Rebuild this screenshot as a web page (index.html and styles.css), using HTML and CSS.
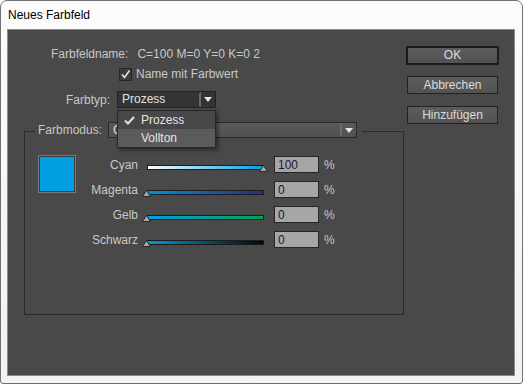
FILE: index.html
```html
<!DOCTYPE html>
<html lang="de">
<head>
    <meta charset="UTF-8">
    <title>Neues Farbfeld</title>
    <link rel="stylesheet" href="styles.css">
</head>
<body>
    <div class="window">
        <div class="titlebar">Neues Farbfeld</div>
        <div class="content">
            <div class="main">
                <div class="row name-row">
                    <span>Farbfeldname:</span>
                    <span class="name-value">C=100 M=0 Y=0 K=0 2</span>
                </div>
                <label class="row check-row">
                    <span class="checkbox">
                        <svg width="11" height="11" viewBox="0 0 11 11"><polyline points="2,5.5 4.5,8.5 9.5,1.5" fill="none" stroke="#e6e6e6" stroke-width="1.6"/></svg>
                    </span>
                    Name mit Farbwert
                </label>
                <div class="row type-row">
                    <span>Farbtyp:</span>
                    <div class="select select-dark">
                        <span class="select-text">Prozess</span>
                        <span class="select-btn"><span class="arrow"></span></span>
                        <ul class="popup">
                            <li>
                                <svg class="tick" width="11" height="9" viewBox="0 0 11 9"><polyline points="1,4.5 4,7.5 10,1" fill="none" stroke="#e2e2e2" stroke-width="2"/></svg>
                                Prozess
                            </li>
                            <li class="active">Vollton</li>
                        </ul>
                    </div>
                </div>

                <div class="group">
                    <div class="group-head">
                        <span class="group-label">Farbmodus:</span>
                        <div class="select select-light">
                            <span class="select-text">CMYK</span>
                            <span class="select-btn"><span class="arrow"></span></span>
                        </div>
                    </div>
                    <div class="group-body">
                        <div class="swatch"></div>
                        <div class="sliders">
                            <span class="slider-label">Cyan</span>
                            <div class="slider"><div class="track track-cyan"></div><svg class="thumb" style="left: 100%" width="9" height="7" viewBox="0 0 9 7"><polygon points="4.5,0.5 8.5,6.5 0.5,6.5" fill="#a8a8a8" stroke="#2a2a2a"/></svg></div>
                            <input type="text" value="100">
                            <span class="pct">%</span>

                            <span class="slider-label">Magenta</span>
                            <div class="slider"><div class="track track-magenta"></div><svg class="thumb" style="left: 0%" width="9" height="7" viewBox="0 0 9 7"><polygon points="4.5,0.5 8.5,6.5 0.5,6.5" fill="#a8a8a8" stroke="#2a2a2a"/></svg></div>
                            <input type="text" value="0">
                            <span class="pct">%</span>

                            <span class="slider-label">Gelb</span>
                            <div class="slider"><div class="track track-gelb"></div><svg class="thumb" style="left: 0%" width="9" height="7" viewBox="0 0 9 7"><polygon points="4.5,0.5 8.5,6.5 0.5,6.5" fill="#a8a8a8" stroke="#2a2a2a"/></svg></div>
                            <input type="text" value="0">
                            <span class="pct">%</span>

                            <span class="slider-label">Schwarz</span>
                            <div class="slider"><div class="track track-schwarz"></div><svg class="thumb" style="left: 0%" width="9" height="7" viewBox="0 0 9 7"><polygon points="4.5,0.5 8.5,6.5 0.5,6.5" fill="#a8a8a8" stroke="#2a2a2a"/></svg></div>
                            <input type="text" value="0">
                            <span class="pct">%</span>
                        </div>
                    </div>
                </div>
            </div>

            <div class="side">
                <button class="btn btn-default">OK</button>
                <button class="btn">Abbrechen</button>
                <button class="btn">Hinzufügen</button>
            </div>
        </div>
    </div>
</body>
</html>
```

FILE: styles.css
```css
* {
    box-sizing: border-box;
}
html, body {
    margin: 0;
    padding: 0;
}
body {
    font-family: "Liberation Sans", Arial, sans-serif;
    font-size: 12px;
    background: #fff;
}
.window {
    width: 523px;
    height: 384px;
    border: 1px solid #707070;
    border-radius: 7px 7px 3px 3px;
    background: linear-gradient(#fbfbfb, #f2f2f2);
    padding: 0 7px 7px 6px;
    display: flex;
    flex-direction: column;
}
.titlebar {
    height: 28px;
    line-height: 28px;
    padding-left: 1px;
    color: #000;
}
.content {
    flex: 1;
    display: flex;
    background-color: #494949;
    border: 1px solid #8c8c8c;
    color: #c8c8c8;
}
.main {
    width: 398px;
    padding-top: 16px;
}
.row {
    display: flex;
    align-items: center;
    height: 16px;
    line-height: 16px;
}
.name-row {
    padding-left: 43px;
}
.name-value {
    margin-left: 9px;
}
.check-row {
    margin-top: 4px;
    padding-left: 111px;
    gap: 4px;
}
.checkbox {
    width: 13px;
    height: 13px;
    background: #3c3c3c;
    border: 1px solid #262626;
    display: flex;
    align-items: center;
    justify-content: center;
}
.type-row {
    margin-top: 9px;
    height: 17px;
    padding-left: 58px;
    gap: 7px;
}

/* selects */
.select {
    position: relative;
    height: 17px;
    display: flex;
    align-items: center;
    border: 1px solid #232323;
}
.select-dark {
    width: 99px;
    background: #343434;
    color: #e2e2e2;
}
.select-light {
    flex: 1;
    background: linear-gradient(#5a5a5a, #515151);
    border-color: #2a2a2a;
    color: #e0e0e0;
    height: 16px;
}
.select-text {
    flex: 1;
    padding-left: 4px;
    line-height: 15px;
}
.select-btn {
    width: 15px;
    height: 100%;
    display: flex;
    align-items: center;
    justify-content: center;
    border-left: 1px solid #6a6a6a;
    box-shadow: -2px 0 0 -1px #6a6a6a;
    margin-left: 2px;
}
.arrow {
    width: 0;
    height: 0;
    border-left: 4px solid transparent;
    border-right: 4px solid transparent;
    border-top: 5px solid #e4e4e4;
}
.popup {
    position: absolute;
    top: 18px;
    left: -1px;
    width: 99px;
    margin: 0;
    padding: 0;
    list-style: none;
    background: #474747;
    border: 1px solid #282828;
    box-shadow: 2px 2px 4px rgba(0, 0, 0, 0.45);
    z-index: 2;
}
.popup li {
    position: relative;
    height: 18px;
    line-height: 18px;
    padding-left: 23px;
    color: #e4e4e4;
}
.popup li.active {
    background: #5b5b5b;
}
.tick {
    position: absolute;
    left: 6px;
    top: 5px;
}

/* Farbmodus group */
.group {
    margin: 23px 0 0 16px;
    width: 380px;
    height: 184px;
    border: 1px solid #2b2b2b;
}
.group-head {
    display: flex;
    align-items: center;
    margin: -10px 41px 0 10px;
    padding: 0 5px 0 3px;
    background: #494949;
    gap: 5px;
}
.group-label {
    width: 65px;
}
.group-body {
    display: flex;
    gap: 4px;
    margin-top: 14px;
    padding-left: 13px;
}
.swatch {
    width: 38px;
    height: 38px;
    margin-top: 3px;
    background: #00a0e3;
    border: 1px solid #7a7a7a;
    box-shadow: inset 0 0 0 1px #3c3c3c;
}
.sliders {
    display: grid;
    grid-template-columns: 58px 126px 55px auto;
    grid-auto-rows: 25px;
    align-items: center;
}
.slider-label {
    text-align: right;
}
.slider {
    position: relative;
    height: 25px;
    margin-left: 9px;
    width: 117px;
}
.track {
    position: absolute;
    top: 13px;
    left: 0;
    right: 0;
    height: 5px;
    border: 1px solid #1c1c1c;
}
.track-cyan {
    background: linear-gradient(to right, #ffffff, #00a0e3);
}
.track-magenta {
    background: linear-gradient(to right, #0092d6, #2d2b7e);
}
.track-gelb {
    background: linear-gradient(to right, #009fe0, #00a34f);
}
.track-schwarz {
    background: linear-gradient(to right, #009ad9, #040608);
}
.thumb {
    position: absolute;
    top: 13px;
    margin-left: -5px;
}
.sliders input {
    width: 45px;
    height: 17px;
    margin-left: 10px;
    padding: 0 0 0 3px;
    border: 1px solid #262626;
    background: #a6a6a6;
    color: #1c1838;
    font-family: inherit;
    font-size: 12px;
}
.pct {
    margin-left: 5px;
}

/* buttons */
.side {
    width: 93px;
    padding-top: 16px;
    display: flex;
    flex-direction: column;
    align-items: stretch;
}
.btn {
    height: 18px;
    margin: 11px 1px 0 1px;
    padding: 0;
    border: 1px solid #222;
    background: linear-gradient(#5c5c5c, #525252);
    color: #dcdcdc;
    font-family: inherit;
    font-size: 12px;
    line-height: 15px;
}
.btn-default {
    height: 19px;
    margin: 0;
    border: 2px solid #1c1c1c;
}
.btn + .btn + .btn {
    margin-top: 12px;
}
```
